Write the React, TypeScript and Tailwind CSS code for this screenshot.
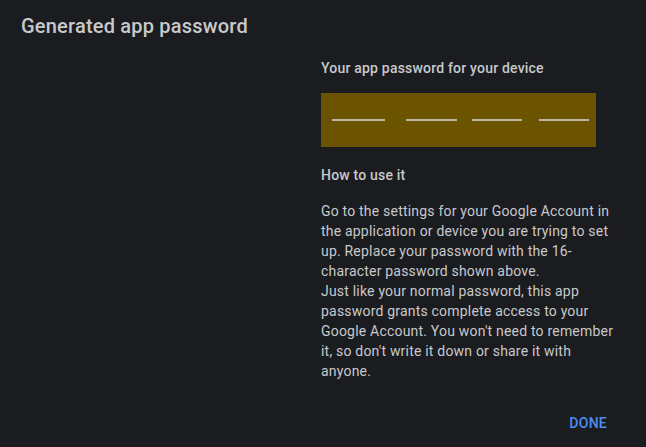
import React from "react";

const dashes = [
  { w: "w-[53px]", ml: "ml-[11px]" },
  { w: "w-[51px]", ml: "ml-[21px]" },
  { w: "w-[50px]", ml: "ml-[15px]" },
  { w: "w-[50px]", ml: "ml-[17px]" },
];

export default function App() {
  return (
    <div className="w-[646px] h-[447px] bg-[#1b1c1f] text-[#c7c9cc] font-['Roboto',sans-serif] tracking-[0.2px] flex flex-col overflow-hidden">
      <h1 className="text-[20px] font-medium leading-[24px] pl-[21px] pt-[14px] text-[#c8c9cb]">
        Generated app password
      </h1>
      <div className="flex flex-1">
        <div className="w-[321px] shrink-0" />
        <div className="w-[300px] flex flex-col">
          <h2 className="text-[14px] font-medium leading-[20px] mt-[20px]">
            Your app password for your device
          </h2>
          <div className="mt-[15px] w-[275px] h-[54px] bg-[#6b5300] flex items-center">
            {dashes.map((d, i) => (
              <div
                key={i}
                className={`${d.w} ${d.ml} h-[2px] bg-[#b8b6a4]`}
              />
            ))}
          </div>
          <h3 className="text-[14px] font-medium leading-[20px] mt-[18px]">
            How to use it
          </h3>
          <p className="text-[14px] leading-[20px] mt-[16px]">
            Go to the settings for your Google Account in the application or
            device you are trying to set up. Replace your password with the
            16-character password shown above.
            <br />
            Just like your normal password, this app password grants complete
            access to your Google Account. You won't need to remember it, so
            don't write it down or share it with anyone.
          </p>
        </div>
      </div>
      <div className="flex justify-end pr-[39px] pb-[14px]">
        <button className="text-[14px] font-medium leading-[20px] tracking-[0.25px] text-[#4b8ff5]">
          DONE
        </button>
      </div>
    </div>
  );
}
